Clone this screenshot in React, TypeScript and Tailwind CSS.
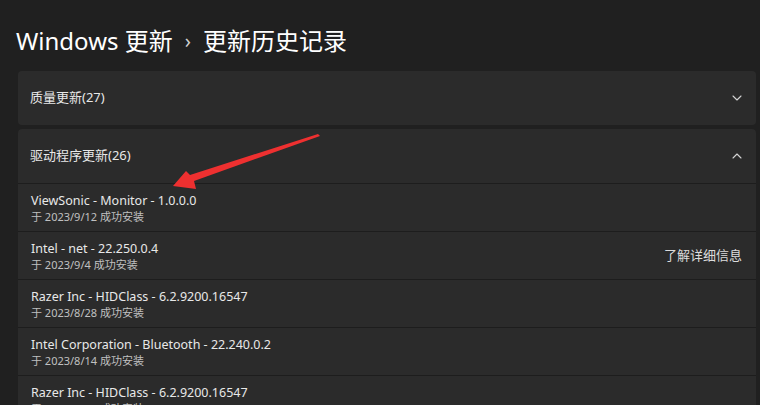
import { ChevronDown, ChevronUp } from 'lucide-react'

const drivers = [
  { name: 'ViewSonic - Monitor - 1.0.0.0', date: '于 2023/9/12 成功安装', link: false },
  { name: 'Intel - net - 22.250.0.4', date: '于 2023/9/4 成功安装', link: true },
  { name: 'Razer Inc - HIDClass - 6.2.9200.16547', date: '于 2023/8/28 成功安装', link: false },
  { name: 'Intel Corporation - Bluetooth - 22.240.0.2', date: '于 2023/8/14 成功安装', link: false },
  { name: 'Razer Inc - HIDClass - 6.2.9200.16547', date: '于 2023/8/14 成功安装', link: false },
]

export default function App() {
  return (
    <div
      className="relative h-[405px] w-[760px] overflow-hidden bg-[#202020] text-white"
      style={{ fontFamily: '"Noto Sans", "Noto Sans CJK SC", sans-serif' }}
    >
      {/* Titre */}
      <div className="flex h-[71px] items-center pt-[10px] pl-[16px] text-[24px] leading-none">
        <span>Windows 更新</span>
        <span className="mx-[12px] text-[20px] text-[#d0d0d0]">›</span>
        <span>更新历史记录</span>
      </div>

      <div className="flex flex-col gap-[4px] pl-[18px] pr-[4px]">
        {/* Qualité */}
        <div className="flex h-[54px] items-center justify-between rounded-[4px] bg-[#2b2b2b] pl-[12px] pr-[11px]">
          <span className="text-[13px] text-[#e8e8e8]">质量更新(27)</span>
          <ChevronDown size={16} strokeWidth={1.6} className="text-[#d4d4d4]" />
        </div>

        {/* Pilotes */}
        <div className="flex flex-col gap-px rounded-t-[4px] bg-[#1d1d1d]">
          <div className="flex h-[54px] items-center justify-between rounded-t-[4px] bg-[#2b2b2b] pl-[12px] pr-[11px]">
            <span className="text-[13px] text-[#e8e8e8]">驱动程序更新(26)</span>
            <ChevronUp size={16} strokeWidth={1.6} className="text-[#d4d4d4]" />
          </div>
          {drivers.map((d, i) => (
            <div
              key={i}
              className="flex h-[47px] items-center justify-between bg-[#2b2b2b] pl-[13px] pr-[14px]"
            >
              <div className="flex flex-col">
                <span className="text-[12.5px] leading-[17px] text-[#e8e8e8]">{d.name}</span>
                <span className="text-[11px] leading-[15px] text-[#c0c0c0]">{d.date}</span>
              </div>
              {d.link && <span className="text-[13px] text-[#dcdcdc]">了解详细信息</span>}
            </div>
          ))}
        </div>
      </div>

      {/* Flèche rouge */}
      <svg className="pointer-events-none absolute left-0 top-0" width="760" height="405">
        <polygon
          points="318,134 320,136 194,181 196,189 173,186 186,171 190,175"
          fill="#ee3030"
        />
      </svg>
    </div>
  )
}
